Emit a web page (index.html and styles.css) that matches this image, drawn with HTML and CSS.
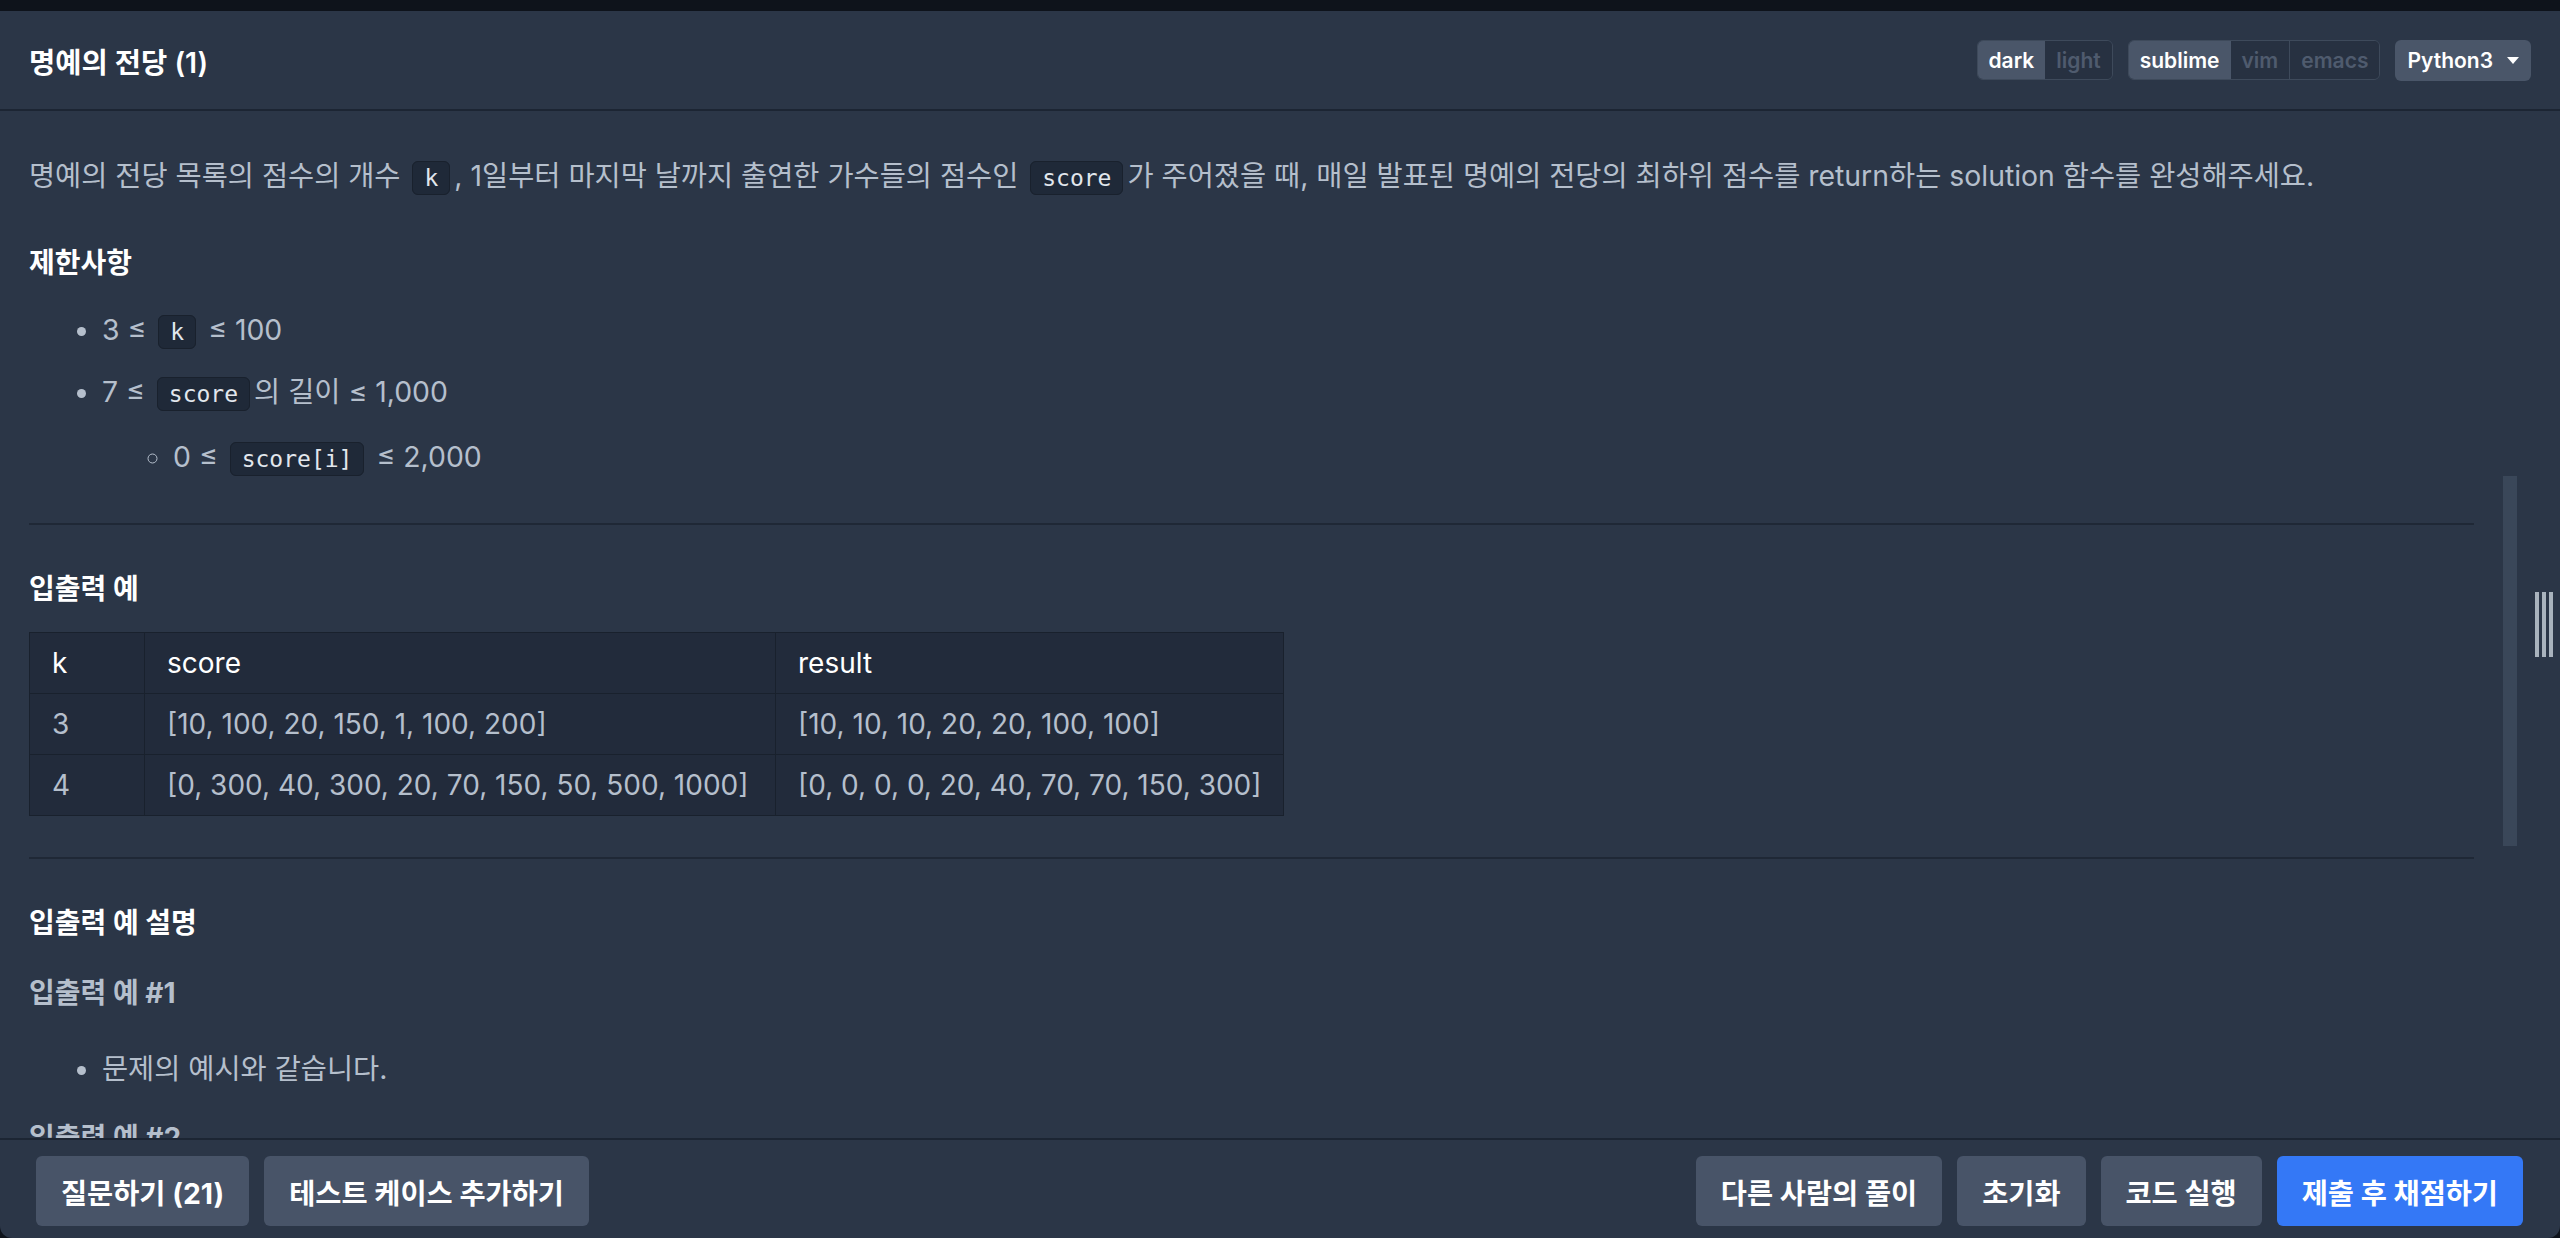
FILE: index.html
```html
<!DOCTYPE html>
<html lang="ko">
<head>
  <meta charset="UTF-8">
  <meta name="viewport" content="width=device-width, initial-scale=1.0">
  <title>명예의 전당 (1)</title>
  <link rel="stylesheet" href="styles.css">
</head>
<body>
  <div class="topbar"></div>
  <div class="panel">
    <header class="header">
      <h1 class="title">명예의 전당 (1)</h1>
      <div class="controls">
        <div class="toggle">
          <button class="seg active">dark</button>
          <button class="seg">light</button>
        </div>
        <div class="toggle">
          <button class="seg active">sublime</button>
          <button class="seg">vim</button>
          <button class="seg">emacs</button>
        </div>
        <button class="lang">Python3<span class="caret"></span></button>
      </div>
    </header>

    <div class="main">
      <div class="desc">
        <p class="text">명예의 전당 목록의 점수의 개수 <code class="chip">k</code>, 1일부터 마지막 날까지 출연한 가수들의 점수인 <code class="chip">score</code>가 주어졌을 때, 매일 발표된 명예의 전당의 최하위 점수를 return하는 solution 함수를 완성해주세요.</p>

        <h5 class="heading first">제한사항</h5>
        <ul class="list">
          <li class="item">3 ≤ <code class="chip">k</code> ≤ 100</li>
          <li class="item">7 ≤ <code class="chip">score</code>의 길이 ≤ 1,000
            <ul class="sublist">
              <li class="item">0 ≤ <code class="chip">score[i]</code> ≤ 2,000</li>
            </ul>
          </li>
        </ul>

        <hr class="divider">

        <h5 class="heading">입출력 예</h5>
        <table class="examples">
          <colgroup>
            <col style="width: 115px">
            <col style="width: 631px">
            <col style="width: 508px">
          </colgroup>
          <thead>
            <tr><th>k</th><th>score</th><th>result</th></tr>
          </thead>
          <tbody>
            <tr><td>3</td><td>[10, 100, 20, 150, 1, 100, 200]</td><td>[10, 10, 10, 20, 20, 100, 100]</td></tr>
            <tr><td>4</td><td>[0, 300, 40, 300, 20, 70, 150, 50, 500, 1000]</td><td>[0, 0, 0, 0, 20, 40, 70, 70, 150, 300]</td></tr>
          </tbody>
        </table>

        <hr class="divider after-table">

        <h5 class="heading">입출력 예 설명</h5>
        <h6 class="subheading">입출력 예 #1</h6>
        <ul class="list">
          <li class="item">문제의 예시와 같습니다.</li>
        </ul>
        <h6 class="subheading">입출력 예 #2</h6>
      </div>

      <div class="track"><div class="thumb"></div></div>
      <div class="splitter">
        <span class="grip"></span>
        <span class="grip"></span>
        <span class="grip"></span>
      </div>
    </div>

    <footer class="footer">
      <div class="btn-group">
        <button class="btn">질문하기 (21)</button>
        <button class="btn">테스트 케이스 추가하기</button>
      </div>
      <div class="btn-group">
        <button class="btn">다른 사람의 풀이</button>
        <button class="btn">초기화</button>
        <button class="btn">코드 실행</button>
        <button class="btn primary">제출 후 채점하기</button>
      </div>
    </footer>
  </div>
</body>
</html>
```

FILE: styles.css
```css
body {
  margin: 0;
  height: 100vh;
  display: flex;
  flex-direction: column;
  background-color: #0e131b;
  font-family: "Inter", "Noto Sans CJK KR", sans-serif;
  color: #b5bfcc;
}

.topbar {
  height: 11px;
  flex-shrink: 0;
  background-color: #0e131b;
}

.panel {
  flex: 1;
  min-height: 0;
  display: flex;
  flex-direction: column;
  background-color: #2b3647;
  border-radius: 0 0 12px 12px;
  overflow: hidden;
}

/* header */
.header {
  height: 98px;
  flex-shrink: 0;
  padding: 0 29px;
  display: flex;
  align-items: center;
  justify-content: space-between;
  border-bottom: 2px solid #1c2533;
}

.title {
  margin: 0;
  font-size: 28.5px;
  font-weight: 600;
  color: #fff;
}

.controls {
  display: flex;
  align-items: center;
  gap: 15px;
}

.toggle {
  display: flex;
  height: 40px;
  box-sizing: border-box;
  border: 1px solid #3e4a5b;
  border-radius: 6px;
  overflow: hidden;
}

.seg {
  padding: 0 11px;
  border: none;
  background-color: #273141;
  font-family: inherit;
  font-size: 21px;
  font-weight: 600;
  color: #4f5b6e;
}

.seg + .seg {
  border-left: 1px solid #3e4a5b;
}

.seg.active {
  background-color: #4a5669;
  color: #fff;
}

.seg.active + .seg {
  border-left: none;
}

.lang {
  height: 41px;
  padding: 0 12px;
  display: flex;
  align-items: center;
  border: none;
  border-radius: 6px;
  background-color: #4a5669;
  font-family: inherit;
  font-size: 21px;
  font-weight: 600;
  color: #fff;
}

.caret {
  margin-left: 14px;
  border-left: 6px solid transparent;
  border-right: 6px solid transparent;
  border-top: 7px solid #fff;
}

/* description */
.main {
  flex: 1;
  min-height: 0;
  display: flex;
}

.desc {
  flex: 1;
  min-width: 0;
  padding: 44px 29px 0 29px;
  overflow: hidden;
  font-size: 28.4px;
  line-height: 41px;
}

.text {
  margin: 0;
}

.chip {
  margin: 0 4px;
  padding: 3px 11px;
  font-family: "DejaVu Sans Mono", monospace;
  font-size: 23px;
  line-height: 30px;
  color: #e2e7ed;
  background-color: #1f2938;
  border: 1px solid #19212d;
  border-radius: 6px;
}

.heading {
  margin: 44px 0 0;
  font-size: 28px;
  font-weight: 700;
  color: #fff;
}

.heading.first {
  margin-top: 47px;
}

.subheading {
  margin: 29px 0 0;
  font-size: 28px;
  font-weight: 700;
  color: #b5bfcc;
}

.list {
  margin: 25px 0 0;
  padding-left: 73px;
}

.subheading + .list {
  margin-top: 34px;
}

.item + .item {
  margin-top: 21px;
}

.sublist {
  margin: 24px 0 0;
  padding-left: 71px;
  list-style: circle;
}

.divider {
  margin: 46px 0 0;
  border: none;
  border-top: 2px solid #1f2836;
}

.divider.after-table {
  margin-top: 41px;
}

.examples {
  width: 1254px;
  margin-top: 22px;
  border-collapse: collapse;
  table-layout: fixed;
  font-size: 28px;
}

.examples th,
.examples td {
  height: 60px;
  padding: 0 22px;
  text-align: left;
  font-weight: 400;
  white-space: nowrap;
  border: 1px solid #19212d;
  background-color: #222b3b;
}

.examples th {
  color: #fff;
}

/* scrollbar and splitter */
.track {
  width: 14px;
  margin-right: 18px;
}

.thumb {
  margin-top: 365px;
  height: 370px;
  background-color: #3a4759;
}

.splitter {
  width: 18px;
  margin-right: 7px;
  display: flex;
  align-items: center;
  justify-content: space-between;
}

.grip {
  width: 4px;
  height: 65px;
  background-color: #a9b3bd;
}

/* footer */
.footer {
  height: 100px;
  flex-shrink: 0;
  box-sizing: border-box;
  padding: 16px 37px 0 36px;
  display: flex;
  justify-content: space-between;
  border-top: 2px solid #1c2533;
}

.btn-group {
  display: flex;
  gap: 15px;
}

.btn {
  height: 70px;
  padding: 0 25px;
  border: none;
  border-radius: 6px;
  background-color: #485468;
  font-family: inherit;
  font-size: 28.4px;
  font-weight: 700;
  color: #fff;
}

.btn.primary {
  background-color: #3478f6;
}
```
